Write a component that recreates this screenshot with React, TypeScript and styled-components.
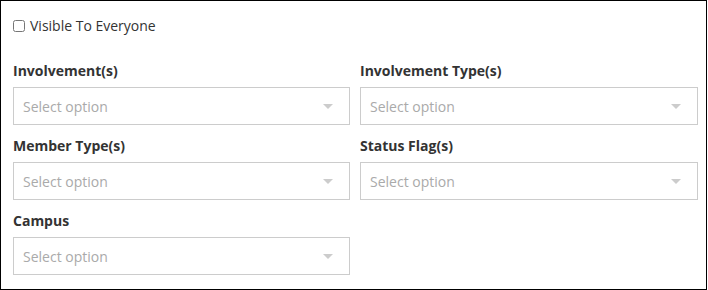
import styled, { createGlobalStyle } from "styled-components";

const GlobalStyle = createGlobalStyle`
  html, body {
    margin: 0;
    padding: 0;
    background: #ffffff;
  }
  body {
    font-family: "Open Sans", "Liberation Sans", sans-serif;
    color: #333333;
  }
`;

const Panel = styled.div`
  box-sizing: border-box;
  width: 707px;
  height: 290px;
  border: 1px solid #000000;
  padding: 17px 8px 0 12px;
`;

const CheckRow = styled.label`
  display: flex;
  align-items: center;
  gap: 5px;
  font-size: 14px;
  line-height: 16px;
  color: #333333;
`;

const CheckBox = styled.input`
  width: 12px;
  height: 12px;
  margin: 0;
`;

const FieldGrid = styled.div`
  display: grid;
  grid-template-columns: 337px 338px;
  column-gap: 10px;
  row-gap: 11px;
  margin-top: 27px;
`;

const Field = styled.div`
  display: flex;
  flex-direction: column;
`;

const Label = styled.div`
  font-size: 14px;
  font-weight: 700;
  line-height: 20px;
  color: #333333;
  margin-bottom: 6px;
`;

const SelectBox = styled.div`
  box-sizing: border-box;
  height: 38px;
  border: 1px solid #cccccc;
  display: flex;
  align-items: center;
  justify-content: space-between;
  padding: 0 16px 0 9px;
`;

const Placeholder = styled.span`
  font-size: 14px;
  color: #aaaaaa;
`;

const Arrow = styled.span`
  width: 0;
  height: 0;
  border-left: 5px solid transparent;
  border-right: 5px solid transparent;
  border-top: 5px solid #cccccc;
`;

const fields = [
  "Involvement(s)",
  "Involvement Type(s)",
  "Member Type(s)",
  "Status Flag(s)",
  "Campus",
];

export default function App() {
  return (
    <>
      <GlobalStyle />
      <Panel>
        <CheckRow>
          <CheckBox type="checkbox" />
          Visible To Everyone
        </CheckRow>
        <FieldGrid>
          {fields.map((f) => (
            <Field key={f}>
              <Label>{f}</Label>
              <SelectBox>
                <Placeholder>Select option</Placeholder>
                <Arrow />
              </SelectBox>
            </Field>
          ))}
        </FieldGrid>
      </Panel>
    </>
  );
}
